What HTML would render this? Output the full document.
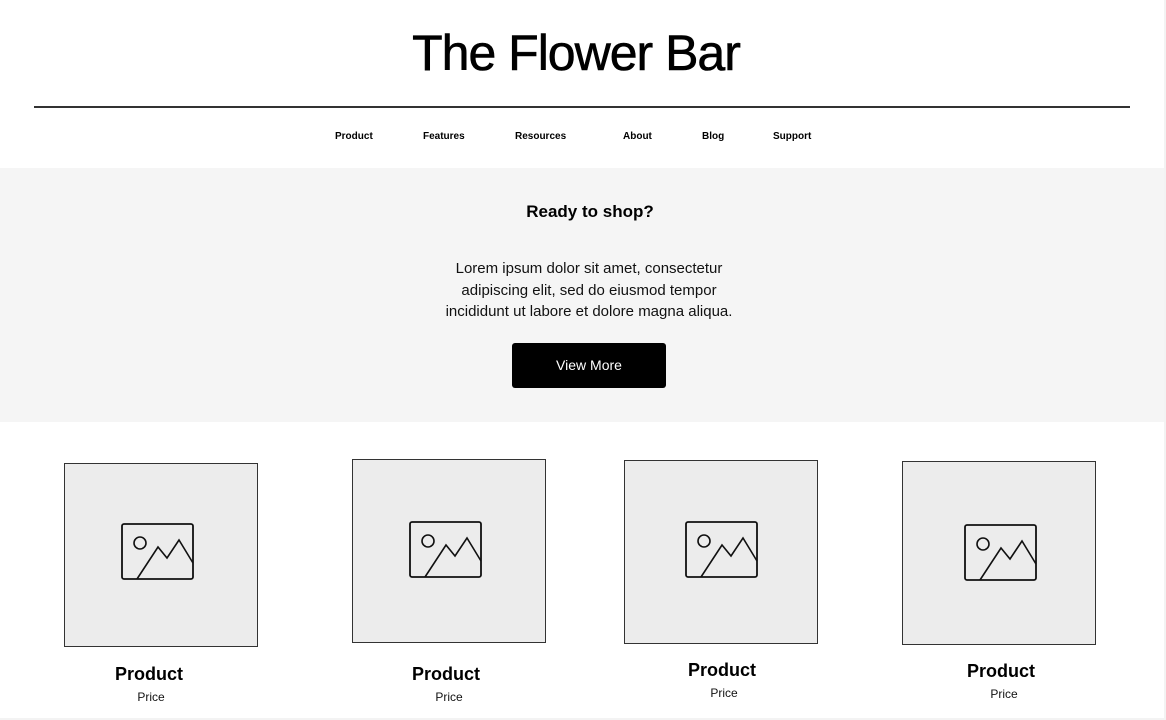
<!DOCTYPE html>
<html><head><meta charset="utf-8"><style>
*{margin:0;padding:0;box-sizing:border-box}
body{width:1166px;height:720px;background:#f3f3f3;font-family:"Liberation Sans",Arial,sans-serif;position:relative;overflow:hidden;color:#000}
.page{position:absolute;left:0;top:0;width:1164px;height:718px;background:#fff}
.abs{position:absolute}
h1{position:absolute;left:-7px;width:1166px;text-align:center;top:24px;font-size:50px;font-weight:normal;letter-spacing:-1px;-webkit-text-stroke:0.6px #000}
.line{left:34px;top:106px;width:1096px;height:1.5px;background:#333}
.nav{top:131px;font-size:10px;font-weight:bold}
.band{left:0;top:168px;width:1164px;height:254px;background:#f5f5f5}
.c{text-align:center}
.btn{left:512px;top:343px;width:154px;height:45px;background:#000;color:#fff;border-radius:3px;font-size:14px;line-height:45px;text-align:center}
.card{position:absolute;width:194px;height:184px;background:#ececec;border:1.3px solid #333}
.card svg{position:absolute}
.pt{font-size:18px;font-weight:bold;width:200px;text-align:center}
.pp{font-size:12px;width:200px;text-align:center;color:#111}
</style></head><body><div class="page">
<h1>The Flower Bar</h1>
<div class="abs line"></div>
<div class="abs nav" style="left:335px">Product</div>
<div class="abs nav" style="left:423px">Features</div>
<div class="abs nav" style="left:515px">Resources</div>
<div class="abs nav" style="left:623px">About</div>
<div class="abs nav" style="left:702px">Blog</div>
<div class="abs nav" style="left:773px">Support</div>
<div class="abs band"></div>
<div class="abs c" style="left:0;width:1180px;top:202px;font-size:17px;font-weight:bold">Ready to shop?</div>
<div class="abs c" style="left:389px;width:400px;top:258px;font-size:15px;line-height:21.5px;color:#111">Lorem ipsum dolor sit amet, consectetur<br>adipiscing elit, sed do eiusmod tempor<br>incididunt ut labore et dolore magna aliqua.</div>
<div class="abs btn">View More</div>

<div class="card" style="left:64px;top:463px"><svg style="left:56px;top:59px" width="74" height="58" viewBox="0 0 74 58"><rect x="1" y="1" width="71" height="55" rx="2" fill="none" stroke="#111" stroke-width="1.8"/><circle cx="19" cy="20" r="6" fill="none" stroke="#111" stroke-width="1.6"/><path d="M16 56 L37 24 L46 35 L58 17 L72 40" fill="none" stroke="#111" stroke-width="1.6"/></svg></div>
<div class="card" style="left:352px;top:459px"><svg style="left:56px;top:61px" width="74" height="58" viewBox="0 0 74 58"><rect x="1" y="1" width="71" height="55" rx="2" fill="none" stroke="#111" stroke-width="1.8"/><circle cx="19" cy="20" r="6" fill="none" stroke="#111" stroke-width="1.6"/><path d="M16 56 L37 24 L46 35 L58 17 L72 40" fill="none" stroke="#111" stroke-width="1.6"/></svg></div>
<div class="card" style="left:624px;top:460px"><svg style="left:60px;top:60px" width="74" height="58" viewBox="0 0 74 58"><rect x="1" y="1" width="71" height="55" rx="2" fill="none" stroke="#111" stroke-width="1.8"/><circle cx="19" cy="20" r="6" fill="none" stroke="#111" stroke-width="1.6"/><path d="M16 56 L37 24 L46 35 L58 17 L72 40" fill="none" stroke="#111" stroke-width="1.6"/></svg></div>
<div class="card" style="left:902px;top:461px"><svg style="left:61px;top:62px" width="74" height="58" viewBox="0 0 74 58"><rect x="1" y="1" width="71" height="55" rx="2" fill="none" stroke="#111" stroke-width="1.8"/><circle cx="19" cy="20" r="6" fill="none" stroke="#111" stroke-width="1.6"/><path d="M16 56 L37 24 L46 35 L58 17 L72 40" fill="none" stroke="#111" stroke-width="1.6"/></svg></div>

<div class="abs pt" style="left:49px;top:664px">Product</div>
<div class="abs pp" style="left:51px;top:690px">Price</div>
<div class="abs pt" style="left:346px;top:664px">Product</div>
<div class="abs pp" style="left:349px;top:690px">Price</div>
<div class="abs pt" style="left:622px;top:660px">Product</div>
<div class="abs pp" style="left:624px;top:686px">Price</div>
<div class="abs pt" style="left:901px;top:661px">Product</div>
<div class="abs pp" style="left:904px;top:687px">Price</div>
</div></body></html>
